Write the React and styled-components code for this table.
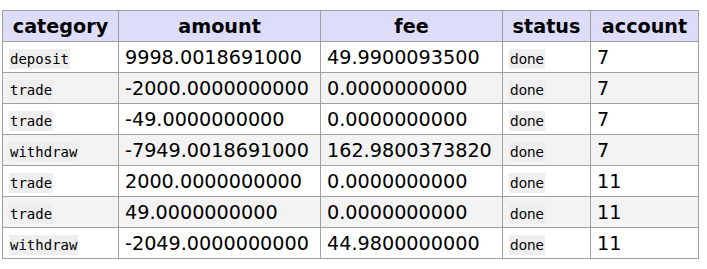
import styled, { createGlobalStyle } from "styled-components";

const Global = createGlobalStyle`
  body {
    margin: 0;
    background: #fff;
    font-family: "DejaVu Sans", Verdana, sans-serif;
    color: #000;
  }
`;

const Wrapper = styled.div`
  padding: 10px 2px;
`;

const Table = styled.table`
  border-collapse: collapse;
  table-layout: fixed;
  width: 696px;
  font-size: 19.2px;
`;

const Head = styled.th`
  width: ${(props) => props.w}px;
  height: 31px;
  background: #ddddfa;
  border: 1px solid #a0a0a0;
  padding: 2px 5px 0;
  font-weight: bold;
  text-align: center;
  line-height: 22px;
  box-sizing: border-box;
`;

const Row = styled.tr`
  background: ${(props) => (props.striped ? "#f3f3f3" : "#fff")};
`;

const Cell = styled.td`
  height: 31px;
  box-sizing: border-box;
  border: 1px solid #a0a0a0;
  padding: 1px 5px 0 6px;
  line-height: 22px;
  white-space: nowrap;
  overflow: hidden;
`;

const Code = styled.code`
  font-family: "DejaVu Sans Mono", monospace;
  font-size: 14px;
  line-height: 1;
  background: #eeeeee;
  padding: 2px 1px;
`;

const Status = styled.span`
  font-size: 13.6px;
  line-height: 1;
  background: #eeeeee;
  padding: 2px 1px;
`;

const columns = [
  ["category", 116],
  ["amount", 202],
  ["fee", 182],
  ["status", 88],
  ["account", 108],
];

const rows = [
  ["deposit", "9998.0018691000", "49.9900093500", "done", "7"],
  ["trade", "-2000.0000000000", "0.0000000000", "done", "7"],
  ["trade", "-49.0000000000", "0.0000000000", "done", "7"],
  ["withdraw", "-7949.0018691000", "162.9800373820", "done", "7"],
  ["trade", "2000.0000000000", "0.0000000000", "done", "11"],
  ["trade", "49.0000000000", "0.0000000000", "done", "11"],
  ["withdraw", "-2049.0000000000", "44.9800000000", "done", "11"],
];

function App() {
  return (
    <Wrapper>
      <Global />
      <Table>
        <thead>
          <tr>
            {columns.map(([name, w]) => (
              <Head key={name} w={w}>
                {name}
              </Head>
            ))}
          </tr>
        </thead>
        <tbody>
          {rows.map((r, i) => (
            <Row key={i} striped={i % 2 === 1}>
              <Cell>
                <Code>{r[0]}</Code>
              </Cell>
              <Cell>{r[1]}</Cell>
              <Cell>{r[2]}</Cell>
              <Cell>
                <Status>{r[3]}</Status>
              </Cell>
              <Cell>{r[4]}</Cell>
            </Row>
          ))}
        </tbody>
      </Table>
    </Wrapper>
  );
}

export default App;
